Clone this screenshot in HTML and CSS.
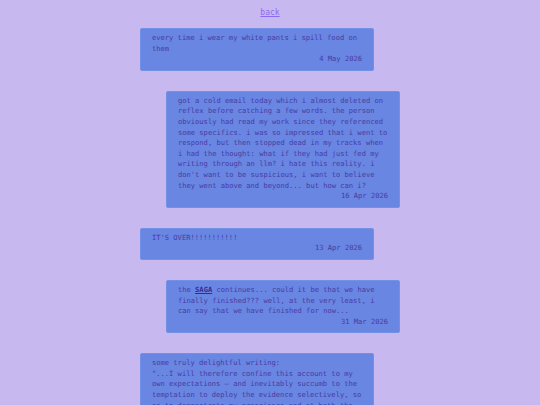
FILE: index.html
```html
<!DOCTYPE html>
<html lang="en">
<head>
    <meta charset="UTF-8">
    <meta name="viewport" content="width=device-width, initial-scale=1.0">
    <title>notes</title>
    <link rel="stylesheet" href="styles.css">
</head>
<body>
    <div class="feed">
        <a class="back" href="#">back</a>

        <!-- Posts -->
        <div class="post left">
            <p class="text">every time i wear my white pants i spill food on them</p>
            <p class="date">4 May 2026</p>
        </div>

        <div class="post right">
            <p class="text">got a cold email today which i almost deleted on reflex before catching a few words. the person obviously had read my work since they referenced some specifics. i was so impressed that i went to respond, but then stopped dead in my tracks when i had the thought: what if they had just fed my writing through an llm? i hate this reality. i don't want to be suspicious, i want to believe they went above and beyond... but how can i?</p>
            <p class="date">16 Apr 2026</p>
        </div>

        <div class="post left">
            <p class="text">IT'S OVER!!!!!!!!!!!</p>
            <p class="date">13 Apr 2026</p>
        </div>

        <div class="post right">
            <p class="text">the <a href="#">SAGA</a> continues... could it be that we have finally finished??? well, at the very least, i can say that we have finished for now...</p>
            <p class="date">31 Mar 2026</p>
        </div>

        <div class="post left">
            <p class="text">some truly delightful writing:<br>"...I will therefore confine this account to my own expectations &ndash; and inevitably succumb to the temptation to deploy the evidence selectively, so as to demonstrate my prescience and at both the expense of others."</p>
            <p class="date">28 Mar 2026</p>
        </div>
    </div>
</body>
</html>
```

FILE: styles.css
```css
body {
    font-family: 'DejaVu Sans Mono', monospace;
    background: #c8b8f0;
    margin: 0;
    color: #4a3aa2;
}

.feed {
    width: 260px;
    margin: 0 auto;
    padding-top: 8px;
    display: flex;
    flex-direction: column;
    gap: 20px;
}

.back {
    align-self: center;
    font-size: 8px;
    line-height: 10px;
    color: #8a6cf2;
    margin-bottom: -10px;
}

.post {
    width: 234px;
    box-sizing: border-box;
    background-color: #6886e2;
    border: 1px solid #7190e6;
    border-radius: 2px;
    padding: 4px 11px 5px;
    font-size: 7.1px;
    line-height: 10.6px;
}

.post.left {
    align-self: flex-start;
}

.post.right {
    align-self: flex-end;
}

.post p {
    margin: 0;
}

.text a {
    color: #3a2a90;
    font-weight: bold;
}

.date {
    text-align: right;
}
```
